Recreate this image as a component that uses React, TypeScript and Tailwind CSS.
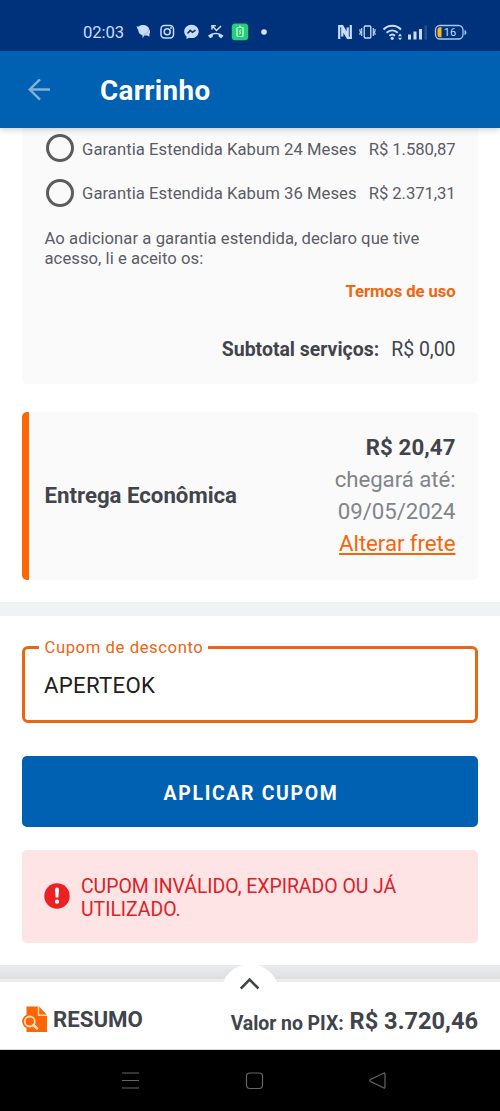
import React from 'react';

interface WarrantyOptionProps {
  label: string;
  price: string;
}

const StatusIcons: React.FC = () => (
  <svg className="ml-[12px] h-[20px] w-[132px]" viewBox="0 0 132 20" fill="none">
    {/* chat */}
    <path d="M.5 4.500h2.300C4 3.400 5.600 3 7.200 3c3.200 0 5.600 1.700 6 4.200 1 1.100 1.200 3.300.2 4.700v2.900l-2-1.200H8.200L6.800 16.200 6.300 13C4 12.600 2.400 10.900 2.400 8.500z" fill="#c9dcfb" />
    <path d="M12.600 7.200c0 2.900-2 4.800-5.100 5" stroke="#7f9bcb" strokeWidth="0.600" />
    {/* instagram */}
    <rect x="25" y="3.500" width="12.500" height="12.500" rx="3.500" stroke="#c9dcfb" strokeWidth="1.500" />
    <circle cx="31.200" cy="9.800" r="3" stroke="#c9dcfb" strokeWidth="1.500" />
    <circle cx="35" cy="6" r="0.900" fill="#c9dcfb" />
    {/* messenger */}
    <path d="M55.500 2.700c-4.200 0-7.300 3-7.300 6.800 0 2 .9 3.700 2.300 5v2.600l2.500-1.300c.8.200 1.600.3 2.500.3 4.200 0 7.200-3 7.200-6.700s-3-6.700-7.200-6.700z" fill="#c9dcfb" />
    <path d="M51.500 11.500l2.700-3 2.300 1.800 3-2.200" stroke="#12357a" strokeWidth="1.700" />
    {/* missed call */}
    <path d="M72 13.800c4.500-4.200 11-4.200 15.500 0l-2.300 2.500-2.500-1.500v-2c-1.900-.6-4-.6-5.900 0v2l-2.500 1.500z" fill="#c9dcfb" />
    <path d="M76 7.500V3.700h3.800M76.300 4l4.200 4.500L85 4" stroke="#c9dcfb" strokeWidth="1.500" />
    {/* battery app */}
    <rect x="95.800" y="1.600" width="16.400" height="16.600" rx="3.500" fill="#25cf78" />
    <rect x="101" y="5.500" width="6" height="9" rx="0.800" stroke="#d8ffe9" strokeWidth="1.200" />
    <path d="M103 4.500h2" stroke="#d8ffe9" strokeWidth="1.300" />
    <path d="M104.600 7.500l-1.300 2.500h1.400l-1.100 2.500" stroke="#d8ffe9" strokeWidth="0.800" />
    <circle cx="128" cy="10" r="2.800" fill="#d5e3fb" />
  </svg>
);

const SystemIcons: React.FC = () => (
  <svg className="h-[20px] w-[130px]" viewBox="0 0 130 20" fill="none">
    {/* nfc */}
    <path d="M1.200 17V4.200h3.200l5.300 9.300V5.500M12.800 3v12.800H9.600L4.300 6.500v8" stroke="#c9dcfb" strokeWidth="2.200" />
    {/* vibrate */}
    <rect x="26.200" y="4" width="6.600" height="12" rx="1" stroke="#c9dcfb" strokeWidth="1.300" />
    <path d="M23.700 6v8M35.300 6v8M22 7v2.300l1 1-1 1V13M37 7v2.300l-1 1 1 1V13" stroke="#c9dcfb" strokeWidth="1.100" />
    {/* wifi */}
    <path d="M45.500 7.500c5-5 12.500-5 17.500 0M48.500 10.800c3.400-3.200 8-3.200 11.300 0M51.400 13.800c1.800-1.500 4-1.500 5.600 0" stroke="#c9dcfb" strokeWidth="2" />
    <circle cx="54.200" cy="16.300" r="1.600" fill="#c9dcfb" />
    <path d="M60 14.200l2-2.700 2 2.700zM60 15.800l2 2.500 2-2.500z" fill="#c9dcfb" />
    {/* signal */}
    <rect x="70" y="12.500" width="3" height="5" fill="#c9dcfb" />
    <rect x="75.500" y="9.500" width="3" height="8" fill="#c9dcfb" />
    <rect x="81" y="7" width="3" height="10.500" fill="#c9dcfb" />
    <rect x="86.500" y="3.500" width="2.500" height="14" fill="#24508f" />
    {/* battery */}
    <rect x="97.500" y="3.500" width="27.500" height="13.500" rx="4.500" stroke="#a9c7f5" strokeWidth="1.300" />
    <path d="M127 8.500c1.200.8 1.200 3.200 0 4z" fill="#a9c7f5" stroke="#a9c7f5" />
    <path d="M103.500 5.300v10h-1.500a2.500 2.500 0 0 1-2.500-2.500v-5a2.500 2.500 0 0 1 2.500-2.500z" fill="#ffb712" />
    <text x="112" y="14.200" textAnchor="middle" fontSize="11" fill="#c9dcfb">16</text>
  </svg>
);

const WarrantyOption: React.FC<WarrantyOptionProps> = ({ label, price }) => (
  <div className="flex h-[44.500px] items-center text-[16.670px] text-[#5a5c68]">
    <span className="ml-[1.500px] mr-[8.500px] size-[28px] shrink-0 rounded-full border-[3px] border-[#5c5c5e]" />
    <span className="pt-[2px] tracking-[0.040px]">{label}</span>
    <span className="ml-auto pt-[2px] tracking-[-0.080px]">{price}</span>
  </div>
);

const ResumoIcon: React.FC = () => (
  <svg className="-mt-[2px] size-[26px]" viewBox="0 0 26 26" fill="none">
    <path d="M4.500.5H17L25 9v17H4.500z" fill="#ff6500" />
    <path d="M16.500.5v8.700H25" stroke="#ffd9bd" strokeWidth="1.400" />
    <circle cx="7.500" cy="15.500" r="7.300" fill="#ff6500" />
    <circle cx="7.800" cy="15.500" r="5" stroke="#ffdcc4" strokeWidth="1.800" />
    <path d="M11.500 19l3.500 3.500" stroke="#ffdcc4" strokeWidth="2.600" strokeLinecap="round" />
  </svg>
);

export default function App() {
  return (
    <div className="flex h-[1111px] w-[500px] flex-col overflow-hidden bg-white font-[Roboto,sans-serif] text-[#41444b]">
      <div className="flex h-[51px] shrink-0 items-center bg-[#00327c] pl-[83px] pr-[32px] pt-[13px]">
        <span className="pt-px text-[16.700px] tracking-[-0.080px] text-[#c9dcfb]">02:03</span>
        <StatusIcons />
        <div className="ml-auto flex">
          <SystemIcons />
        </div>
      </div>

      <header className="relative z-10 flex h-[77px] shrink-0 items-center bg-[#0060b1] pl-[28px] shadow-[0_2px_6px_rgba(0,0,0,0.180)]">
        <svg className="size-[22px]" viewBox="0 0 22 22" fill="none" stroke="#80b0d9" strokeWidth="2.400">
          <path d="M22 10.500H1.500M12 .3L1.700 10.500 12 20.700" />
        </svg>
        <h1 className="ml-[50px] mt-[2px] text-[27.800px] font-bold tracking-[0.350px] text-white">Carrinho</h1>
      </header>

      <main className="flex h-[837px] shrink-0 flex-col">
        <section className="mx-[22px] h-[256px] shrink-0 rounded-b-[5px] bg-[#fafafa] px-[22px]">
          <div className="-mt-[2px] pr-[0.500px]">
            <WarrantyOption label="Garantia Estendida Kabum 24 Meses" price="R$ 1.580,87" />
            <WarrantyOption label="Garantia Estendida Kabum 36 Meses" price="R$ 2.371,31" />
          </div>
          <p className="mt-[14px] pl-[0.500px] text-[16.670px] leading-[19.500px] tracking-[0.050px] text-[#5a5c68]">
            Ao adicionar a garantia estendida, declaro que tive
            <br />
            acesso, li e aceito os:
          </p>
          <div className="mt-[14px] pr-[0.500px] text-right text-[16.670px] leading-[20px] font-bold tracking-[-0.080px] text-[#f2660f]">Termos de uso</div>
          <div className="mt-[36px] flex items-center justify-end pr-[0.500px] text-[19.440px] leading-[24px]">
            <span className="font-bold">Subtotal serviços:</span>
            <span className="ml-[12px]">R$ 0,00</span>
          </div>
        </section>

        <section className="mx-[22px] mt-[27.500px] flex h-[168.500px] shrink-0 items-center justify-between rounded-[5px] border-l-[7px] border-[#ff6500] bg-[#fafafa] pl-[15.500px] pr-[22.500px] text-[22.220px]">
          <span className="font-bold">Entrega Econômica</span>
          <div className="-mt-px flex flex-col items-end leading-[32.200px] tracking-[-0.050px] text-[#80858c]">
            <span className="font-bold tracking-[0.100px] text-[#41444b]">R$ 20,47</span>
            <span>chegará até:</span>
            <span>09/05/2024</span>
            <span className="text-[#f2660f] underline">Alterar frete</span>
          </div>
        </section>

        <div className="mt-[22px] h-[14px] shrink-0 bg-[#f0f2f5]" />

        <fieldset className="mx-[22px] mt-[20px] h-[87px] shrink-0 rounded-[6px] border-[3px] border-[#ec6514] pl-[14px]">
          <legend className="pr-[5px] pl-[5.500px] text-[16.670px] leading-[22px] tracking-[0.580px] text-[#ec6514]">
            <span className="relative top-px">Cupom de desconto</span>
          </legend>
          <div className="mt-[13px] pl-[5px] text-[22.220px] leading-[28px] tracking-[0.280px] text-[#202020]">APERTEOK</div>
        </fieldset>

        <button className="mx-[22px] mt-[33px] h-[71px] shrink-0 rounded-[5px] bg-[#0060b1] pt-[4px] pl-[2px] text-[19.440px] font-bold tracking-[1.650px] text-white">
          APLICAR CUPOM
        </button>

        <div className="mx-[22px] mt-[23px] flex h-[93px] shrink-0 items-center rounded-[5px] bg-[#ffe4e6] pl-[22px] text-[19.440px] leading-[23px] text-[#dc2128]">
          <svg className="-mt-[2px] mr-[11px] size-[26px] shrink-0" viewBox="0 0 26 26">
            <circle cx="13" cy="13" r="12.700" fill="#ed2024" />
            <path d="M11 6.500a2 2 0 0 1 4 0l-.6 8h-2.800z" fill="#fff" />
            <circle cx="13" cy="18.700" r="2.100" fill="#fff" />
          </svg>
          <p className="pt-[2px] tracking-[-0.030px]">
            CUPOM INVÁLIDO, EXPIRADO OU JÁ
            <br />
            UTILIZADO.
          </p>
        </div>
      </main>

      <div className="h-[14px] shrink-0 bg-gradient-to-b from-[#e9ebed] to-[#dedfe1]" />
      <div className="h-[3px] shrink-0 bg-[#ececec]" />

      <footer className="relative flex h-[68px] shrink-0 items-center border-b border-[#d8d8d8] bg-white px-[22px] pt-[9px]">
        <div className="absolute -top-[18px] left-[219px] flex h-[30px] w-[62px] justify-center overflow-hidden">
          <div className="flex size-[58px] shrink-0 justify-center rounded-full bg-white pt-[13px]">
            <svg className="h-[13px] w-[20px]" viewBox="0 0 20 13" fill="none" stroke="#41444b" strokeWidth="2.600">
              <path d="M.8 11.500l8.800-9 8.800 9" />
            </svg>
          </div>
        </div>
        <ResumoIcon />
        <span className="ml-[5px] text-[22.220px] font-bold">RESUMO</span>
        <div className="ml-auto flex items-end pt-px font-bold leading-[28px]">
          <span className="relative top-[3px] text-[19.440px] tracking-[-0.050px]">Valor no PIX:</span>
          <span className="ml-[6px] text-[23.600px]">R$ 3.720,46</span>
        </div>
      </footer>

      <nav className="flex h-[61px] shrink-0 items-center bg-black pl-[121px]">
        <svg className="h-[20px] w-[266px]" viewBox="0 0 266 20" fill="none" stroke="#666" strokeWidth="1.200">
          <path d="M1 2h17M1 9.500h17M1 17h17" />
          <rect x="125.500" y="2" width="16" height="15.500" rx="3.500" />
          <path d="M262.500 2.200q1.500-.8 1.500 1v12.600q0 1.800-1.500 1L249.500 10.500q-1.400-1 0-2z" />
        </svg>
      </nav>
    </div>
  );
}
